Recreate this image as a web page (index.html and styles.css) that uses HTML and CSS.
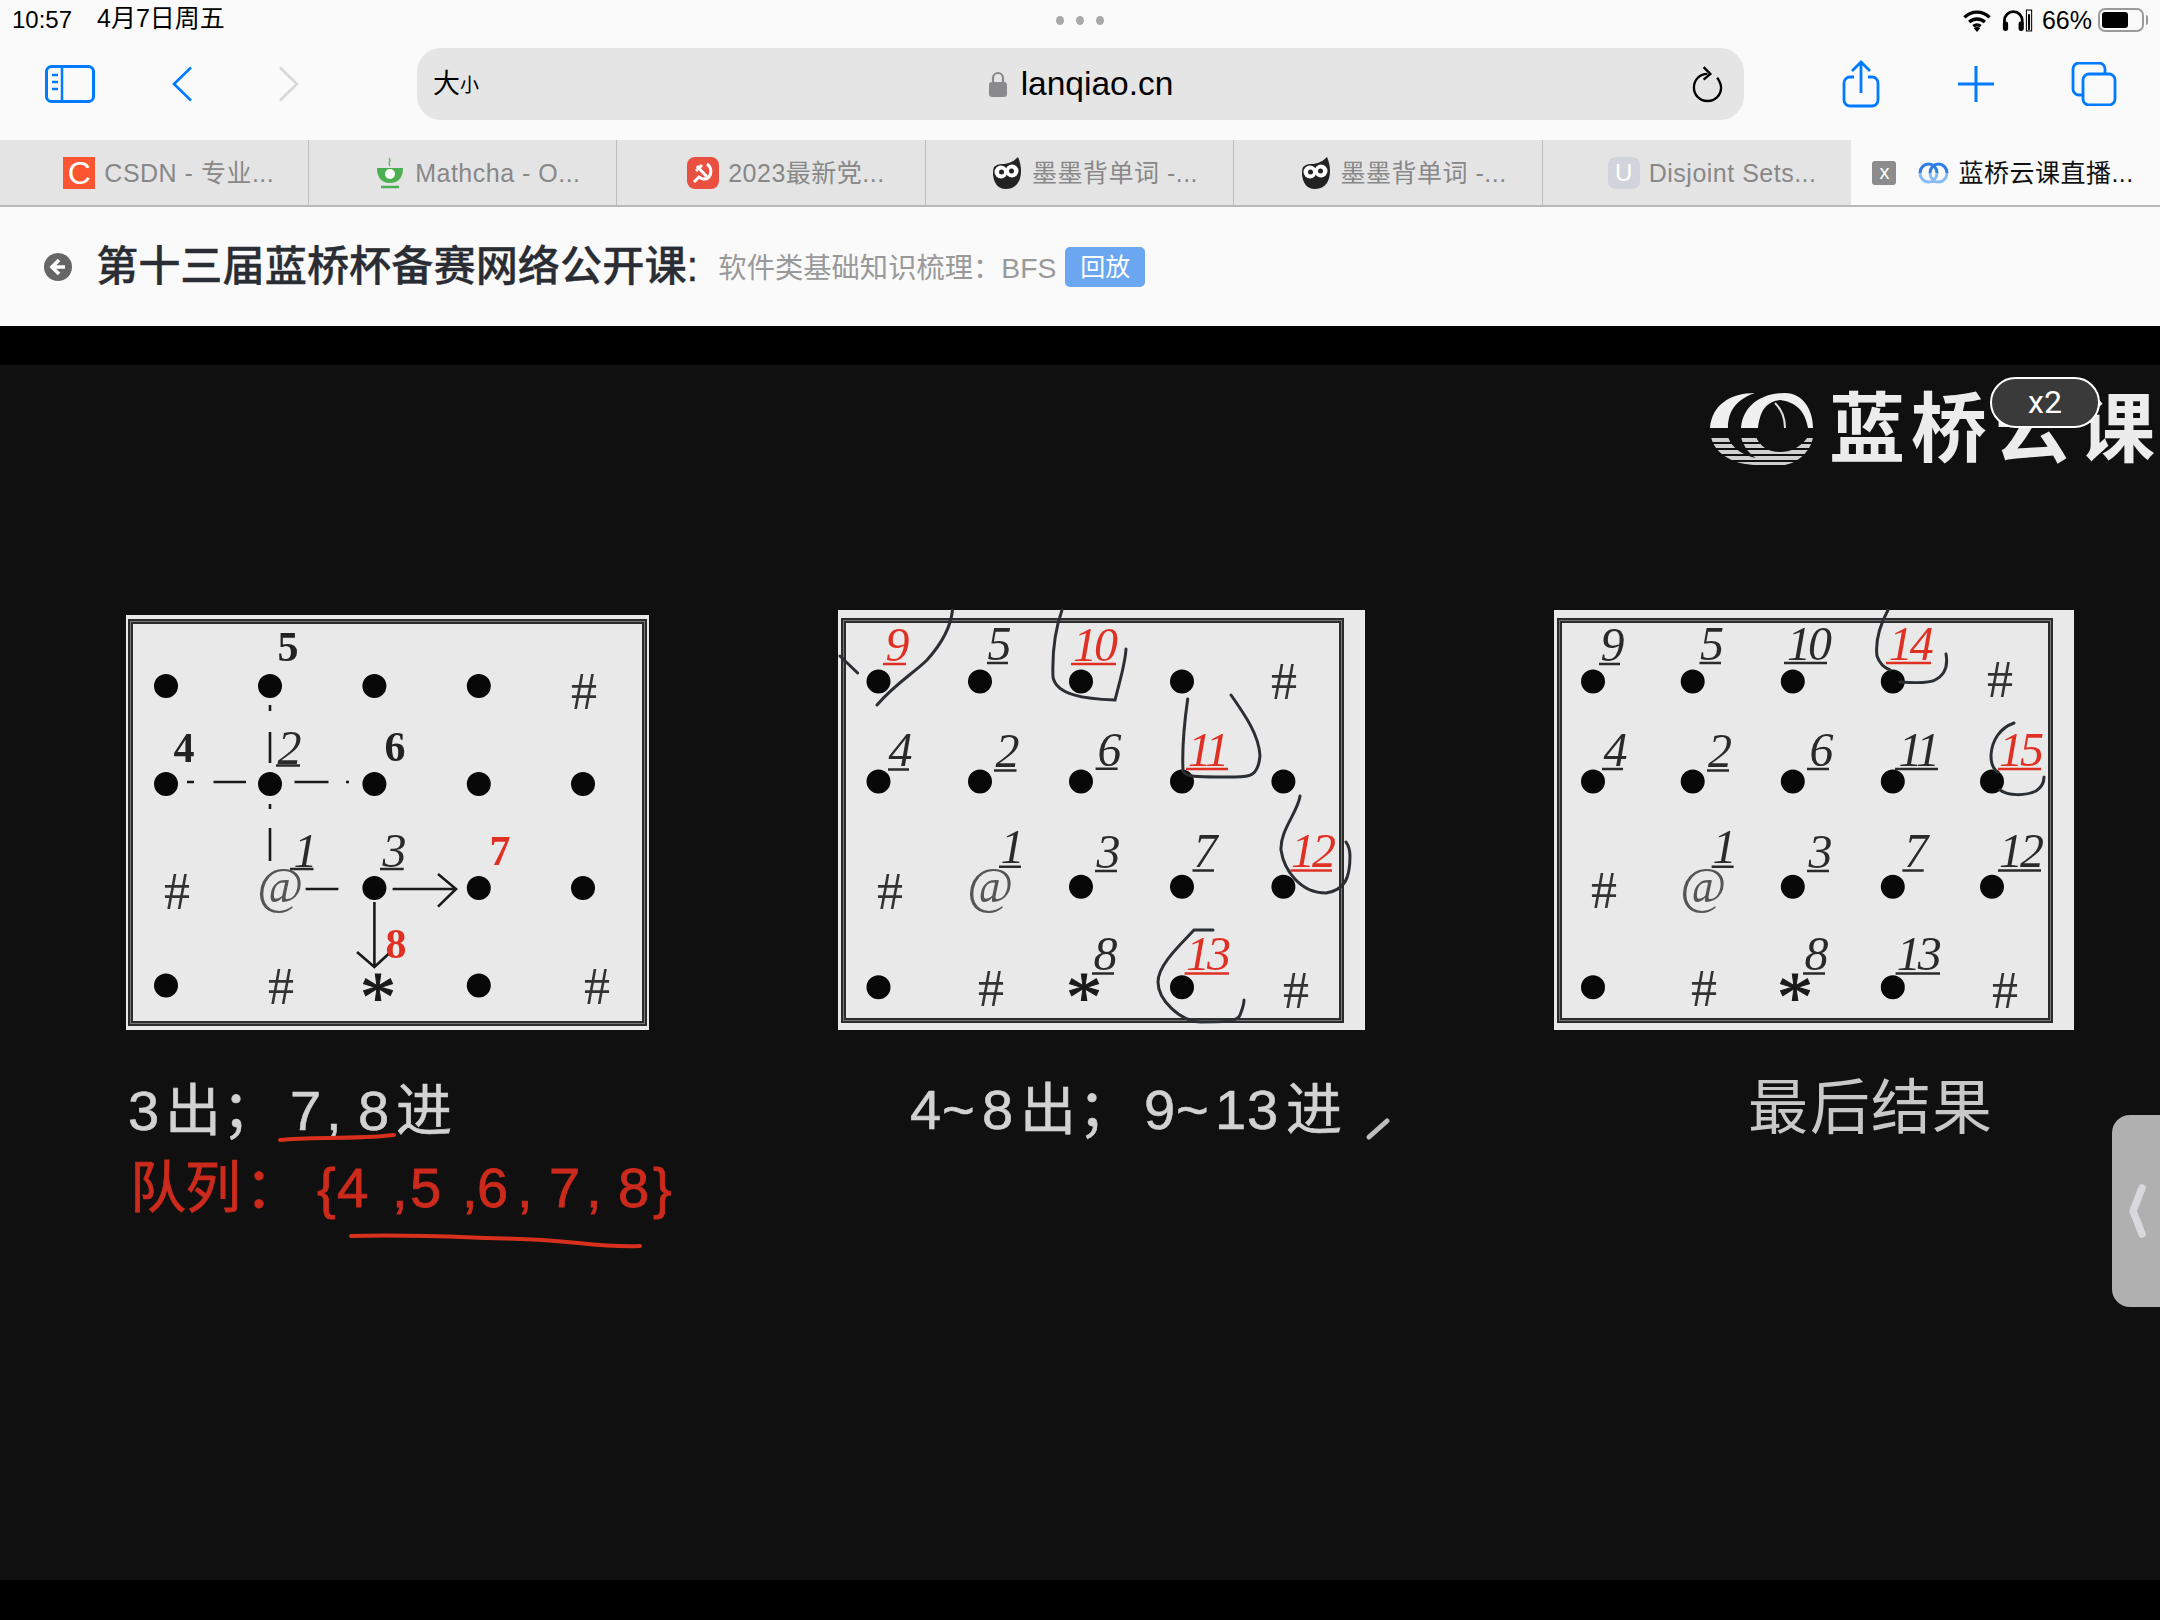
FILE: index.html
```html
<!DOCTYPE html>
<html lang="zh">
<head>
<meta charset="utf-8">
<title>蓝桥云课直播</title>
<link rel="stylesheet" href="styles.css">
</head>
<body>
<div class="page">
  <div class="status">
    <div class="status-left"><span>10:57</span><span class="date">4月7日周五</span></div>
    <div class="dots"><i></i><i></i><i></i></div>
    <div class="status-right">
      <svg class="ic-wifi" viewBox="0 0 28 22"><path d="M2 8a17 17 0 0 1 24 0M6.500 12.500a11 11 0 0 1 15 0M10.500 16.500a5.500 5.500 0 0 1 7 0" fill="none" stroke="#000" stroke-width="3.200"/><path d="M14 22l-3-3.500a4 4 0 0 1 6 0z"/></svg>
      <svg class="ic-head" viewBox="0 0 30 22"><path d="M3 15V11a8.500 8.500 0 0 1 17 0v4" fill="none" stroke="#000" stroke-width="2.600"/><rect x="1.500" y="12" width="5" height="9" rx="2"/><rect x="16.500" y="12" width="5" height="9" rx="2"/><rect x="24" y="1" width="5" height="20" fill="none" stroke="#000" stroke-width="1"/><rect x="25.500" y="5" width="2" height="15"/></svg>
      <span class="pct">66%</span>
      <div class="battery"><div class="battery-fill"></div></div><div class="battery-nub"></div>
    </div>
  </div>

  <div class="toolbar">
    <svg class="ic-side" viewBox="0 0 50 38"><rect x="1.500" y="1.500" width="47" height="35" rx="5" fill="none" stroke="#007aff" stroke-width="3"/><path d="M17 1.500v35" stroke="#007aff" stroke-width="2.500"/><path d="M7 10h6M7 17h6M7 24h6" stroke="#007aff" stroke-width="2.500"/></svg>
    <svg class="ic-back" viewBox="0 0 21 36"><path d="M19 1.500L2 18l17 16.500" fill="none" stroke="#007aff" stroke-width="2.600"/></svg>
    <svg class="ic-forward" viewBox="0 0 21 36"><path d="M2 1.500L19 18 2 34.500" fill="none" stroke="#d8d8d8" stroke-width="2.600"/></svg>
    <div class="urlbar">
      <div class="textsize"><span class="big">大</span><span class="small">小</span></div>
      <div class="domain">
        <svg class="ic-lock" viewBox="0 0 18 26"><path d="M4 12V7a5 5 0 0 1 10 0v5" fill="none" stroke="#8a8a8e" stroke-width="2.200"/><rect x="0" y="11" width="18" height="15" rx="3" fill="#8a8a8e"/></svg>
        <span>lanqiao.cn</span>
      </div>
      <svg class="ic-reload" viewBox="0 0 32 38"><path d="M16 8C8 8 2 14 2 22c0 8 6 14 14 14s14-6 14-14c0-4-2-7-4-10" fill="none" stroke="#000" stroke-width="2.400"/><path d="M12 1l7 7-7 6" fill="none" stroke="#000" stroke-width="2.400"/></svg>
    </div>
    <svg class="ic-share" viewBox="0 0 38 48"><path d="M12 17H8a6 6 0 0 0-6 6v17a6 6 0 0 0 6 6h22a6 6 0 0 0 6-6V23a6 6 0 0 0-6-6h-4M19 33V2M10 11l9-9 9 9" fill="none" stroke="#007aff" stroke-width="2.800"/></svg>
    <svg class="ic-plus" viewBox="0 0 36 36"><path d="M18 0v36M0 18h36" stroke="#007aff" stroke-width="3"/></svg>
    <svg class="ic-tabs" viewBox="0 0 46 44"><path d="M11 33H8a6 6 0 0 1-6-6V7a6 6 0 0 1 6-6h20a6 6 0 0 1 6 6v5" fill="none" stroke="#007aff" stroke-width="2.800"/><rect x="12" y="12" width="32" height="31" rx="6" fill="none" stroke="#007aff" stroke-width="2.800"/></svg>
  </div>

  <div class="tabs">
    <div class="tab">
      <span class="fav fav-c">C</span><span class="tab-title">CSDN - 专业...</span>
    </div>
    <div class="tab">
      <svg class="fav" viewBox="0 0 32 32"><path d="M15 1c3 3-2 4 1 8" fill="none" stroke="#6cb56a" stroke-width="1.500"/><path d="M3 11h26c0 10-5 15-13 15S3 21 3 11z" fill="#4caf50"/><circle cx="16" cy="17" r="5" fill="#fff"/><path d="M7 30h18" stroke="#4caf50" stroke-width="2.500"/></svg>
      <span class="tab-title">Mathcha - O...</span>
    </div>
    <div class="tab">
      <svg class="fav" viewBox="0 0 32 32"><rect width="32" height="32" rx="8" fill="#e9503f"/><path d="M20 7a9 9 0 0 1 1 14c-3 2-7 1-9-1" fill="none" stroke="#fff" stroke-width="3"/><path d="M10 9l10 11M15 8l-6 6M7 25l6-6" fill="none" stroke="#fff" stroke-width="3"/></svg>
      <span class="tab-title">2023最新党...</span>
    </div>
    <div class="tab">
      <svg class="fav" viewBox="0 0 32 32"><use href="#owl"/></svg>
      <span class="tab-title">墨墨背单词 -...</span>
    </div>
    <div class="tab">
      <svg class="fav" viewBox="0 0 32 32"><use href="#owl"/></svg>
      <span class="tab-title">墨墨背单词 -...</span>
    </div>
    <div class="tab">
      <span class="fav fav-u">U</span><span class="tab-title">Disjoint Sets...</span>
    </div>
    <div class="tab tab-active">
      <span class="tab-close">x</span>
      <svg class="fav" viewBox="0 0 32 32"><path d="M3 16a8.500 9 0 0 1 17 0M13 16a8.500 9 0 0 1 17 0" fill="none" stroke="#2f7de6" stroke-width="3"/><path d="M3 16a8.500 9 0 0 0 17 0M13 16a8.500 9 0 0 0 17 0" fill="none" stroke="#86bbf4" stroke-width="3"/></svg>
      <span class="tab-title">蓝桥云课直播...</span>
    </div>
  </div>

  <div class="header">
    <svg class="ic-circle" viewBox="0 0 28 28"><circle cx="14" cy="14" r="14" fill="#666"/><path d="M15 7l-7 7 7 7M8 14h13" fill="none" stroke="#fff" stroke-width="3.600"/></svg>
    <span class="title">第十三届蓝桥杯备赛网络公开课:</span>
    <span class="subtitle">软件类基础知识梳理：BFS</span>
    <span class="badge">回放</span>
  </div>

  <div class="band"></div>

  <div class="video">
    <svg class="canvas" viewBox="0 365 2160 1215">
      <defs>
        <pattern id="stripes" width="6" height="6" patternUnits="userSpaceOnUse"><rect width="6" height="4" fill="#cfcfcf"/></pattern>
      </defs>

      <!-- logo -->
      <path class="logo-top" d="M1710 428C1712 405 1730 393 1755 393 1735 400 1728 412 1728 428Z"/>
      <path class="logo-top" d="M1741 428C1743 405 1762 393 1785 393 1803 393 1813 410 1813 428H1808C1805 410 1795 402 1780 400 1765 402 1760 412 1758 428Z"/>
      <path class="logo-thin" d="M1775 403C1782 410 1785 420 1785 428"/>
      <path class="logo-low" d="M1711 437C1715 455 1735 465 1758 465H1785C1800 462 1811 450 1813 437H1808C1800 448 1790 452 1780 452 1768 452 1760 446 1756 437H1741C1744 448 1750 454 1756 458 1742 455 1732 448 1728 437Z"/>
      <text class="logo-text" x="1829 1911 1995 2079" y="456">蓝桥云课</text>

      <!-- panel 1 -->
      <rect class="sheet" x="126" y="615" width="523" height="415"/>
      <rect class="frame" x="130.500" y="621.500" width="514" height="402"/>
      <rect class="frame-in" x="130.500" y="621.500" width="514" height="402"/>
      <path class="dots-ink" d="M166 686h0M270 686h0M374.400 686h0M478.800 686h0M166 784h0M270 784h0M374.400 784h0M478.800 784h0M583 784h0M374.400 888h0M478.800 888h0M583 888h0M166 985.500h0M478.800 985.500h0"/>
      <path class="thin" d="M270 705v6M270 732v31M270 804v5M270 828v33M187 782h7M213.500 782h32.500M294.500 782h34M346 782h3M305.600 889h32.800M392.600 889H456M438 874l18 15-18 17.600M374.400 902v65M357 952l17.400 15 16.200-15"/>
      <g class="bold">
        <text x="288" y="661">5</text><text x="184" y="762">4</text><text x="395" y="761">6</text>
        <text class="red" x="500" y="865">7</text><text class="red" x="396" y="958">8</text>
      </g>
      <g class="ital">
        <text x="288" y="764">2</text><text x="304" y="867">1</text><text x="393" y="867">3</text>
      </g>
      <path class="ul" d="M276 765.600h24M290 869h23.500M380 869h23.700"/>
      <g class="hash">
        <text x="584" y="709">#</text><text x="177" y="909">#</text><text x="281" y="1004">#</text><text x="597" y="1004">#</text>
      </g>
      <text class="at" x="280" y="902">@</text>
      <text class="star" x="378" y="1021">*</text>
      <text class="cap" x="128 165 222 290 326 345 358 396" y="1130">3出；7, 8进</text>
      <path class="redline" d="M280 1140C310 1136 350 1140 394 1135"/>
      <text class="cap-red" x="130 185 245 317 337 392 410 462 477 517 549 586 618 653" y="1207">队列：{4,5,6,7,8}</text>
      <path class="redline" d="M351 1236C420 1234 470 1238 520 1239S600 1248 640 1246"/>

      <!-- panel 2 -->
      <rect class="sheet" x="838" y="610" width="527" height="420"/>
      <rect class="frame" x="843.500" y="620.500" width="498" height="400"/>
      <rect class="frame-in" x="843.500" y="620.500" width="498" height="400"/>
      <path class="dots-ink" d="M878.500 681.400h0M980 681.400h0M1081 681.400h0M1182 681.400h0M878.500 781.600h0M980 781.600h0M1081 781.600h0M1182 781.600h0M1283.400 781.600h0M1081 886.700h0M1182 886.700h0M1283.400 886.700h0M878.500 987.300h0M1182 987.300h0"/>
      <g class="ital">
        <text x="998" y="660">5</text><text x="899" y="766">4</text><text x="1006" y="767">2</text><text x="1108" y="766">6</text>
        <text x="1011" y="863">1</text><text x="1107" y="868">3</text><text x="1204" y="867">7</text><text x="1104" y="970">8</text>
        <text class="red" x="896" y="661">9</text><text class="red" x="1094" y="661">10</text><text class="red" x="1207" y="766">11</text>
        <text class="red" x="1312" y="867">12</text><text class="red" x="1207" y="970">13</text>
      </g>
      <path class="ul" d="M987 663h21M888 769.400h21M994 770.500h22.500M1095.600 768.700h22M999 866.700h22M1095 871h22M1192.500 870.400h21.500M1092 973.600h22"/>
      <path class="ul-red" d="M883 664h23M1071 664h45M1186 769h42M1290.500 870.400h41.500M1184.600 973.600h44.400"/>
      <g class="hash">
        <text x="1284" y="699">#</text><text x="890" y="909">#</text><text x="991" y="1006">#</text><text x="1296" y="1008">#</text>
      </g>
      <text class="at" x="990" y="902">@</text>
      <text class="star" x="1084" y="1021">*</text>
      <path class="pen" d="M952.500 610C951 625 945 640 927 660 915 672 895 684 877 705M840 656L857.600 673M1062 610C1055 630 1052 650 1053 677 1056 695 1085 699 1115 700 1120 680 1125 665 1126 649M1187.700 699C1184 725 1182 750 1183 771 1186 778 1200 777 1235 777 1250 777 1258 776 1260 756 1259 735 1245 715 1231 695M1300 796C1298 812 1280 830 1281 850 1284 870 1300 893 1326 893 1345 890 1350 878 1350 856 1350 850 1348 845 1346 842M1213 930H1194C1180 945 1158 965 1158 982 1158 1000 1180 1021 1200 1022 1220 1022 1238 1022 1240 1015 1242 1010 1244 1005 1244 1000"/>
      <text class="cap" x="910 942 982 1020 1078 1144 1176 1215 1247 1286" y="1129">4~8出；9~13进</text>
      <path class="scribble" d="M1369 1137L1387 1121"/>

      <!-- panel 3 -->
      <rect class="sheet" x="1554" y="610" width="520" height="420"/>
      <rect class="frame" x="1559.500" y="620.500" width="491" height="400"/>
      <rect class="frame-in" x="1559.500" y="620.500" width="491" height="400"/>
      <path class="dots-ink" d="M1593 681.400h0M1692.700 681.400h0M1792.800 681.400h0M1892.800 681.400h0M1593 781.600h0M1692.700 781.600h0M1792.800 781.600h0M1892.800 781.600h0M1992 781.600h0M1792.800 886.700h0M1892.800 886.700h0M1992 886.700h0M1593 987.300h0M1892.800 987.300h0"/>
      <g class="ital">
        <text x="1611" y="661">9</text><text x="1710.600" y="660">5</text><text x="1808" y="660">10</text>
        <text x="1614" y="766">4</text><text x="1718.600" y="767">2</text><text x="1820" y="766">6</text><text x="1917.700" y="766">11</text>
        <text x="1723" y="863">1</text><text x="1819" y="868">3</text><text x="1914.700" y="867">7</text><text x="2020" y="867">12</text>
        <text x="1815" y="970">8</text><text x="1917.700" y="970">13</text>
        <text class="red" x="1909.700" y="660">14</text><text class="red" x="2020" y="766">15</text>
      </g>
      <path class="ul" d="M1599 664h21M1699.500 663h21.500M1784 663h43M1602 769h21M1707 770.500h22M1807 769h22M1895 769h43M1711.600 866.700h22M1807 871h22M1902.400 870.400h21.300M1998 870.400h43M1803 973.600h22M1895.600 973.600h44.400"/>
      <path class="ul-red" d="M1886 663h45M1998 769h43"/>
      <g class="hash">
        <text x="2000" y="697">#</text><text x="1604" y="908">#</text><text x="1704" y="1006">#</text><text x="2005" y="1008">#</text>
      </g>
      <text class="at" x="1703" y="902">@</text>
      <text class="star" x="1795" y="1021">*</text>
      <path class="pen" d="M1888 610C1880 625 1875 640 1877 656 1880 665 1885 668 1890 670M1900 682C1915 683 1930 683 1935 680 1945 675 1948 665 1946 654M2014 723C2000 728 1992 740 1991 755 1991 765 1994 770 1998 772M2000 790C2008 796 2025 796 2036 791 2042 787 2044 782 2044 777"/>
      <text class="cap-big" x="1748 1810 1871 1932" y="1129">最后结果</text>
    </svg>

    <div class="speed">x2</div>
    <div class="handle">
      <svg class="ic-handle" viewBox="0 0 18 54"><path d="M14 4L5 27l9 23" fill="none" stroke="#d9d9dd" stroke-width="7.500" stroke-linecap="round" stroke-linejoin="round"/></svg>
    </div>
  </div>

  <div class="band-bottom"></div>
</div>

<svg class="defs" width="0" height="0">
  <symbol id="owl" viewBox="0 0 32 32">
    <path d="M3 10c2-2 5-3 8-3 5 0 10-1 16-7 2 5 3 9 3 14 0 9-4 18-15 18C6 32 3 25 2 18c0-3 0-6 1-8z" fill="#222"/>
    <circle cx="10" cy="15" r="6.500" fill="#fff"/><circle cx="21" cy="14" r="6.500" fill="#fff"/>
    <circle cx="10.500" cy="15" r="2.500" fill="#222"/><circle cx="20.500" cy="14" r="2.500" fill="#222"/>
  </symbol>
</svg>
</body>
</html>
```

FILE: styles.css
```css
* { box-sizing: border-box; }
html, body { margin: 0; padding: 0; background: #000; }
body { font-family: "Liberation Sans", "Noto Sans CJK SC", sans-serif; }
.page { width: 2160px; height: 1620px; display: flex; flex-direction: column; overflow: hidden; }
svg { display: block; flex: none; }
.defs { position: absolute; }

/* status bar */
.status { height: 40px; background: #fafafa; display: grid; grid-template-columns: 1fr auto 1fr; align-items: center; padding: 0 12px; color: #000; }
.status-left { display: flex; align-items: center; gap: 25px; font-size: 24px; line-height: 30px; }
.date { font-size: 25px; position: relative; top: -2px; }
.dots { display: flex; gap: 12px; }
.dots i { width: 8px; height: 9px; border-radius: 50%; background: #a8a8a8; }
.status-right { display: flex; align-items: center; justify-content: flex-end; }
.ic-wifi { width: 30px; height: 23px; margin-right: 9px; position: relative; left: -3px; }
.ic-head { width: 32px; height: 23px; margin-right: 6px; position: relative; left: -3px; }
.pct { font-size: 25px; margin-right: 6px; }
.battery { width: 46px; height: 24px; border: 2px solid #9a9a9a; border-radius: 7px; padding: 2px; }
.battery-fill { width: 26px; height: 100%; background: #000; border-radius: 3px; }
.battery-nub { width: 2px; height: 10px; margin-left: 2px; background: #9a9a9a; border-radius: 0 2px 2px 0; }

/* toolbar */
.toolbar { height: 100px; background: #fafafa; display: flex; align-items: center; padding: 0 0 12px 45px; }
.ic-side { width: 50px; height: 38px; margin-right: 77px; }
.ic-back { width: 21px; height: 36px; margin-right: 85px; }
.ic-forward { width: 21px; height: 36px; margin-right: 118px; }
.urlbar { width: 1327px; height: 72px; background: #e5e5e5; border-radius: 24px; display: grid; grid-template-columns: 1fr auto 1fr; align-items: center; padding: 0 21px 0 16px; margin-right: 98px; }
.textsize { display: flex; align-items: flex-end; color: #000; }
.textsize .big { font-size: 27px; line-height: 30px; }
.textsize .small { font-size: 19px; line-height: 26px; }
.domain { display: flex; align-items: center; gap: 14px; font-size: 33.500px; color: #000; padding-left: 6px; }
.ic-lock { width: 18px; height: 26px; }
.ic-reload { width: 31px; height: 37px; justify-self: end; }
.ic-share { width: 38px; height: 48px; margin-right: 78px; }
.ic-plus { width: 36px; height: 36px; margin-right: 77px; }
.ic-tabs { width: 46px; height: 44px; }

/* tab strip */
.tabs { height: 67px; display: grid; grid-template-columns: repeat(7, 1fr); border-bottom: 2px solid #b8b8b8; background: #fafafa; }
.tab { display: flex; align-items: center; justify-content: center; gap: 9px; padding-left: 30px; background: #e4e4e4; border-right: 1px solid #bdbdbd; color: #888; font-size: 25px; letter-spacing: 0.5px; line-height: 32px; min-width: 0; white-space: nowrap; }
.tab:nth-child(6) { border-right: 0; }
.tab-active { background: #fafafa; color: #111; justify-content: flex-start; padding-left: 21px; border-right: 0; }
.tab-close { width: 24px; height: 24px; background: #8c8c8c; color: #fff; border-radius: 3px; font-size: 20px; line-height: 22px; text-align: center; margin-right: 12px; letter-spacing: 0; }
.fav { width: 32px; height: 32px; flex: none; letter-spacing: 0; }
.fav-c { background: #fc5531; color: #fff; font-size: 32px; line-height: 32px; text-align: center; }
.fav-u { background: #d2d4dc; color: #fff; border-radius: 8px; font-size: 24px; line-height: 32px; text-align: center; }

/* page header */
.header { height: 119px; background: #fafafa; display: flex; align-items: center; padding-left: 44px; }
.ic-circle { width: 28px; height: 28px; margin-right: 24px; }
.title { font-size: 42.200px; font-weight: 500; -webkit-text-stroke: 0.3px #2a2d33; color: #2a2d33; margin: 0 20px 8px 0; white-space: nowrap; }
.subtitle { font-size: 28.300px; color: #999; margin: 0 9px 3px 0; white-space: nowrap; }
.badge { width: 80px; height: 40px; background: #6aa7f0; color: #fff; border-radius: 5px; font-size: 25px; line-height: 40px; text-align: center; }

/* video */
.band { height: 39px; background: #000; flex: none; }
.video { position: relative; height: 1215px; background: #101010; flex: none; }
.band-bottom { height: 40px; background: #000; flex: none; }
.canvas { width: 2160px; height: 1215px; filter: blur(0.7px); }

.sheet { fill: #e9e9e9; }
.frame { fill: none; stroke: #2c2c2c; stroke-width: 5px; }
.frame-in { fill: none; stroke: #777; stroke-width: 1px; }
.dots-ink { fill: none; stroke: #080808; stroke-width: 24px; stroke-linecap: round; }
.thin { fill: none; stroke: #1a1a1a; stroke-width: 2.600px; }
.ul { fill: none; stroke: #2a2a2a; stroke-width: 2.500px; }
.ul-red { fill: none; stroke: #e03024; stroke-width: 2.500px; }
.pen { fill: none; stroke: #2b2f33; stroke-width: 3px; stroke-linecap: round; }
.bold text { font: bold 42px "Liberation Serif", serif; text-anchor: middle; fill: #222; }
.ital text { font: italic 48px "Liberation Serif", serif; text-anchor: middle; fill: #2a2a2a; letter-spacing: -3px; }
.bold .red, .ital .red { fill: #e03024; }
.hash text { font: 52px "Liberation Serif", serif; text-anchor: middle; fill: #333; }
.at { font: italic 50px "Liberation Serif", serif; text-anchor: middle; fill: #555; }
.star { font: 72px "Liberation Serif", serif; text-anchor: middle; fill: #1a1a1a; stroke: #1a1a1a; stroke-width: 1px; }
.cap { font: 56px "Liberation Sans", "Noto Sans CJK SC", sans-serif; fill: #d2d2d2; stroke: #d2d2d2; stroke-width: 0.6px; }
.cap-big { font: 60px "Noto Sans CJK SC", sans-serif; fill: #c8c8c8; }
.cap-red { font: 56px "Liberation Sans", "Noto Sans CJK SC", sans-serif; fill: #cc2a1c; stroke: #cc2a1c; stroke-width: 0.8px; }
.redline { fill: none; stroke: #d8301c; stroke-width: 4px; stroke-linecap: round; }
.scribble { fill: none; stroke: #bdbdbd; stroke-width: 5px; stroke-linecap: round; }
.logo-text { font: bold 76px "Noto Sans CJK SC", sans-serif; fill: #ececec; }
.logo-top { fill: #f0f0f0; }
.logo-thin { fill: none; stroke: #e0e0e0; stroke-width: 2px; }
.logo-low { fill: url(#stripes); }

.speed { position: absolute; left: 1990px; top: 12px; width: 110px; height: 51px; border: 2px solid #fff; border-radius: 26px; background: #3a3a3a; color: #fff; font-size: 32px; line-height: 47px; text-align: center; font-family: Roboto, sans-serif; }
.handle { position: absolute; left: 2112px; top: 750px; width: 48px; height: 192px; background: #b0b0b0; border-radius: 18px 0 0 18px; display: flex; align-items: center; padding-left: 16px; }
.ic-handle { width: 18px; height: 54px; }
```
